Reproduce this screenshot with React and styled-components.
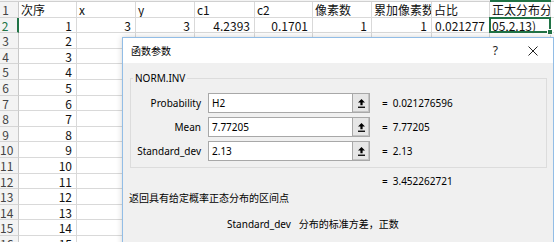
import { Fragment } from "react";
import styled, { createGlobalStyle } from "styled-components";

const COLS = "19px 58px 59px 59px 60px 58px 59px 60px 58px 61px 1fr";
const GREEN = "#217346";

const GlobalStyle = createGlobalStyle`
  html, body {
    margin: 0;
    padding: 0;
  }
  body {
    width: 554px;
    height: 242px;
    overflow: hidden;
    background: #fff;
    font-family: "Noto Sans CJK SC", sans-serif;
  }
`;

const Page = styled.div`
  position: relative;
  width: 554px;
  height: 242px;
  overflow: hidden;
`;

const HeaderStrip = styled.div`
  display: grid;
  grid-template-columns: ${COLS};
  height: 2px;
`;

const HeaderEdge = styled.div`
  background: #f3f3f3;
  border-bottom: ${(p) => (p.$selected ? `2px solid ${GREEN}` : "1px solid #d0d0d0")};
  box-sizing: border-box;
`;

const Sheet = styled.div`
  display: grid;
  grid-template-columns: ${COLS};
  grid-auto-rows: 15.6px;
  font-size: 12px;
  color: #111;
`;

const RowHead = styled.div`
  box-sizing: border-box;
  background: #f3f3f3;
  border-bottom: 1px solid #d5d5d5;
  border-right: ${(p) => (p.$selected ? `2px solid ${GREEN}` : "1px solid #c8c8c8")};
  color: ${(p) => (p.$selected ? GREEN : "#444")};
  padding-right: 7px;
  text-align: center;
  line-height: 15px;
  white-space: nowrap;
  overflow: hidden;
`;

const Cell = styled.div`
  position: relative;
  box-sizing: border-box;
  border-right: 1px solid #d9d9d9;
  border-bottom: 1px solid #d9d9d9;
  padding: 0 4px 0 2px;
  text-align: ${(p) => (p.$num ? "right" : "left")};
  line-height: 15px;
  white-space: nowrap;
  overflow: ${(p) => (p.$selected ? "visible" : "hidden")};
  z-index: ${(p) => (p.$selected ? 1 : 0)};

  ${(p) =>
    p.$selected &&
    `
    &::after {
      content: "";
      position: absolute;
      inset: -1px;
      border: 2px solid ${GREEN};
    }
    &::before {
      content: "";
      position: absolute;
      right: -3px;
      bottom: -3px;
      width: 4px;
      height: 4px;
      background: ${GREEN};
      border: 1px solid #fff;
      z-index: 2;
    }
  `}
`;

const Dialog = styled.div`
  position: absolute;
  left: 122px;
  top: 37px;
  width: 432px;
  height: 240px;
  box-sizing: border-box;
  border: 1px solid #92bde6;
  box-shadow: 0 0 6px rgba(0, 0, 0, 0.18);
  background: #f0f0f0;
  font-family: "Noto Sans", "Noto Sans CJK SC", sans-serif;
  font-size: 10px;
  color: #000;
  z-index: 5;
`;

const TitleBar = styled.div`
  display: flex;
  align-items: center;
  height: 25px;
  background: #fff;
  padding-left: 8px;
`;

const Title = styled.span`
  flex: 1;
  line-height: 14px;
`;

const HelpMark = styled.span`
  font-size: 12px;
  color: #222;
  margin-right: 30px;
`;

const CloseMark = styled.svg`
  width: 10px;
  height: 10px;
  margin-right: 15px;
`;

const GroupBox = styled.fieldset`
  margin: 8px 6px 0 7px;
  padding: 8px 0 6px 0;
  border: 1px solid #dcdcdc;
  min-width: 0;
`;

const Legend = styled.legend`
  margin-left: 2px;
  padding: 0 2px;
  line-height: 14px;
`;

const ArgRow = styled.div`
  display: flex;
  align-items: center;
  height: 20px;
  & + & {
    margin-top: 4px;
  }
`;

const ArgLabel = styled.span`
  width: 70px;
  margin-right: 7px;
  text-align: right;
  white-space: nowrap;
`;

const Field = styled.div`
  display: flex;
  width: 162px;
  height: 20px;
  box-sizing: border-box;
  border: 1px solid #a8a8a8;
  background: #fff;
`;

const FieldText = styled.span`
  flex: 1;
  padding-left: 3px;
  line-height: 18px;
`;

const PickButton = styled.span`
  display: flex;
  align-items: center;
  justify-content: center;
  width: 16px;
  border-left: 1px solid #a8a8a8;
  background: #e6e6e6;
  box-shadow: inset -1px -1px 0 #c4c4c4;
`;

const Equals = styled.span`
  margin-left: ${(p) => (p.$flush ? "0" : "12px")};
  margin-right: 5px;
`;

const ResultRow = styled.div`
  display: flex;
  align-items: center;
  height: 20px;
  margin-top: 3px;
  padding-left: 259px;
`;

const Description = styled.div`
  padding-left: 6px;
  line-height: 14px;
`;

const ParamHelp = styled.div`
  display: flex;
  gap: 8px;
  margin-top: 12px;
  padding-left: 104px;
  line-height: 14px;
`;

const header = ["次序", "x", "y", "c1", "c2", "像素数", "累加像素数", "占比", "正太分布分", ""];
const dataRows = [
  ["1", "3", "3", "4.2393", "0.1701", "1", "1", "0.021277", "05,2.13)", ""],
  ["2", "5", "4", "4.0175", "0.065", "4", "5", "0.106383", "5.118174", ""],
];
for (let i = 3; i <= 15; i++) dataRows.push([String(i), "", "", "", "", "", "", "", "", ""]);

const args = [
  { name: "Probability", input: "H2", value: "0.021276596" },
  { name: "Mean", input: "7.77205", value: "7.77205" },
  { name: "Standard_dev", input: "2.13", value: "2.13" },
];

const PickIcon = () => (
  <svg width="7" height="9" viewBox="0 0 7 9">
    <polygon points="3.5,0 0,3.6 2.4,3.6 2.4,6.2 4.6,6.2 4.6,3.6 7,3.6" fill="#000" />
    <rect x="0" y="7.6" width="7" height="1.3" fill="#000" />
  </svg>
);

export default function App() {
  return (
    <Page>
      <GlobalStyle />
      <HeaderStrip>
        {Array.from({ length: 11 }).map((_, i) => (
          <HeaderEdge key={i} $selected={i === 9} />
        ))}
      </HeaderStrip>
      <Sheet>
        <RowHead>1</RowHead>
        {header.map((h, i) => (
          <Cell key={`h${i}`}>{h}</Cell>
        ))}
        {dataRows.map((row, r) => (
          <Fragment key={`r${r}`}>
            <RowHead $selected={r === 0}>{r + 2}</RowHead>
            {row.map((v, c) => (
              <Cell key={c} $num={c !== 8 || r !== 0} $selected={r === 0 && c === 8}>
                {v}
              </Cell>
            ))}
          </Fragment>
        ))}
      </Sheet>

      <Dialog>
        <TitleBar>
          <Title>函数参数</Title>
          <HelpMark>?</HelpMark>
          <CloseMark viewBox="0 0 10 10">
            <path d="M0.5 0.5 L9.5 9.5 M9.5 0.5 L0.5 9.5" stroke="#222" strokeWidth="1" fill="none" />
          </CloseMark>
        </TitleBar>
        <GroupBox>
          <Legend>NORM.INV</Legend>
          {args.map((a) => (
            <ArgRow key={a.name}>
              <ArgLabel>{a.name}</ArgLabel>
              <Field>
                <FieldText>{a.input}</FieldText>
                <PickButton>
                  <PickIcon />
                </PickButton>
              </Field>
              <Equals>=</Equals>
              <span>{a.value}</span>
            </ArgRow>
          ))}
        </GroupBox>
        <ResultRow>
          <Equals $flush>=</Equals>
          <span>3.452262721</span>
        </ResultRow>
        <Description>返回具有给定概率正态分布的区间点</Description>
        <ParamHelp>
          <span>Standard_dev</span>
          <span>分布的标准方差，正数</span>
        </ParamHelp>
      </Dialog>
    </Page>
  );
}
